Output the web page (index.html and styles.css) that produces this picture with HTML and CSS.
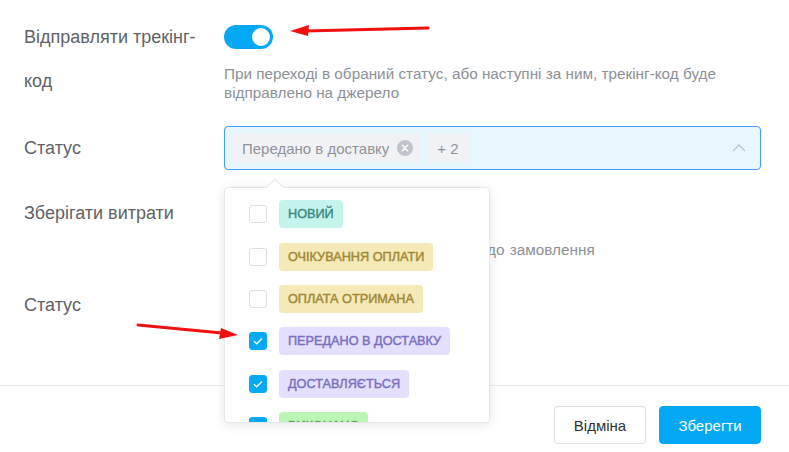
FILE: index.html
```html
<!DOCTYPE html>
<html lang="uk">
<head>
<meta charset="utf-8">
<link rel="stylesheet" href="styles.css">
</head>
<body>
<div class="page">
  <form class="form">
    <div class="row row-track">
      <div class="label">Відправляти трекінг-код</div>
      <div class="content">
        <div class="switch-line"><span class="switch"><span class="knob"></span></span></div>
        <div class="hint">При переході в обраний статус, або наступні за ним, трекінг-код буде відправлено на джерело</div>
      </div>
    </div>
    <div class="row row-status">
      <div class="label">Статус</div>
      <div class="content">
        <div class="select">
          <span class="chip">Передано в доставку <span class="chip-x"><svg viewBox="0 0 16 16" width="16" height="16"><circle cx="8" cy="8" r="8" fill="#c0c4cc"/><path d="M5.3 5.3l5.4 5.4M10.7 5.3l-5.4 5.4" stroke="#fff" stroke-width="1.4" stroke-linecap="round"/></svg></span></span>
          <span class="chip chip-more">+ 2</span>
          <span class="chevron"><svg viewBox="0 0 14 8" width="14" height="8"><path d="M1 7l6-6 6 6" fill="none" stroke="#c0c4cc" stroke-width="1.3"/></svg></span>
        </div>
      </div>
    </div>
    <div class="row row-costs">
      <div class="label">Зберігати витрати</div>
      <div class="content">
        <div class="switch-line"><span class="switch"><span class="knob"></span></span></div>
        <div class="hint">Витрати на відправку будуть додані до замовлення</div>
      </div>
    </div>
    <div class="row row-status2">
      <div class="label">Статус</div>
      <div class="content"></div>
    </div>
  </form>
  <div class="footer">
    <button type="button" class="btn btn-cancel">Відміна</button>
    <button type="button" class="btn btn-save">Зберегти</button>
  </div>

  <div class="dropdown">
    <span class="dd-arrow"></span>
    <ul class="dd-list">
      <li class="dd-item"><span class="cb"></span><span class="tag tag-teal">НОВИЙ</span></li>
      <li class="dd-item"><span class="cb"></span><span class="tag tag-yellow">ОЧІКУВАННЯ ОПЛАТИ</span></li>
      <li class="dd-item"><span class="cb"></span><span class="tag tag-yellow">ОПЛАТА ОТРИМАНА</span></li>
      <li class="dd-item"><span class="cb cb-on"><svg viewBox="0 0 18 18" width="18" height="18"><path d="M5 9.2l2.7 2.6L13 6.5" fill="none" stroke="#fff" stroke-width="1.3"/></svg></span><span class="tag tag-purple">ПЕРЕДАНО В ДОСТАВКУ</span></li>
      <li class="dd-item"><span class="cb cb-on"><svg viewBox="0 0 18 18" width="18" height="18"><path d="M5 9.2l2.7 2.6L13 6.5" fill="none" stroke="#fff" stroke-width="1.3"/></svg></span><span class="tag tag-purple">ДОСТАВЛЯЄТЬСЯ</span></li>
      <li class="dd-item"><span class="cb cb-on"><svg viewBox="0 0 18 18" width="18" height="18"><path d="M5 9.2l2.7 2.6L13 6.5" fill="none" stroke="#fff" stroke-width="1.3"/></svg></span><span class="tag tag-green">ВИКОНАНО</span></li>
    </ul>
  </div>

  <svg class="annot" viewBox="0 0 789 452" width="789" height="452">
    <path d="M428 28 L305 31" stroke="#f01010" stroke-width="3" stroke-linecap="round"/>
    <path d="M290 31 L309 25 L308 36 Z" fill="#f01010"/>
    <path d="M138 325 L222 333" stroke="#f01010" stroke-width="3" stroke-linecap="round"/>
    <path d="M238 335 L219 339 L221 328 Z" fill="#f01010"/>
  </svg>
</div>
</body>
</html>
```

FILE: styles.css
```css
* { box-sizing: border-box; }
html, body { margin: 0; padding: 0; background: #fff; }
body { font-family: "Liberation Sans", Arial, sans-serif; color: #606266; }
.page { position: relative; width: 789px; height: 452px; overflow: hidden; }

.form { padding-top: 15px; margin: 0; }
.row { display: flex; }
.label { width: 224px; padding-left: 24px; padding-right: 24px; font-size: 18px; line-height: 44px; color: #606266; flex: none; }
.content { width: 537px; }

.switch-line { height: 44px; display: flex; align-items: center; }
.switch { display: inline-flex; align-items: center; justify-content: flex-end; width: 49px; height: 24px; border-radius: 12px; background: #03a9f4; padding: 3px; }
.knob { width: 18px; height: 18px; border-radius: 50%; background: #fff; }
.hint { font-size: 15.3px; line-height: 19px; color: #8c9097; margin-top: 4.5px; }
.row-costs .hint { word-spacing: 1px; }

.row-track { height: 111px; }
.row-status { height: 44px; align-items: center; margin-bottom: 21px; }
.select { height: 44px; border: 1px solid #409eff; border-radius: 4px; background: #e8f6fe; display: flex; align-items: center; padding: 0 6px; gap: 7px; position: relative; }
.chip { height: 30px; display: inline-flex; align-items: center; background: #f0f2f5; border-radius: 4px; color: #909399; font-size: 15px; padding: 0 7px 0 11px; }
.chip-x { display: inline-flex; margin-left: 8px; }
.chip-more { padding: 0 10px; }
.chevron { position: absolute; right: 14px; top: 17px; display: flex; }

.row-costs { height: 92px; }
.row-status2 { height: 44px; }

.footer { position: absolute; left: 0; right: 0; top: 385px; border-top: 1px solid #e8e8ee; display: flex; justify-content: flex-end; gap: 13px; padding: 20px 28px 0 0; }
.btn { height: 38px; border-radius: 4px; font-family: "Liberation Sans", Arial, sans-serif; font-size: 15px; padding: 0; cursor: pointer; }
.btn-cancel { width: 92px; background: #fff; border: 1px solid #dcdfe6; color: #303133; }
.btn-save { width: 102px; background: #03a9f4; border: 1px solid #03a9f4; color: #fff; }

.dropdown { position: absolute; left: 224px; top: 187px; width: 266px; height: 236px; background: #fff; border: 1px solid #e4e7ed; border-radius: 4px; box-shadow: 0 2px 12px rgba(0,0,0,0.1); }
.dd-arrow { position: absolute; top: -7px; left: 44px; width: 12px; height: 12px; background: #fff; border-left: 1px solid #e4e7ed; border-top: 1px solid #e4e7ed; transform: rotate(45deg); }
.dd-list { list-style: none; margin: 0; padding: 5px 0 0 0; height: 234px; overflow: hidden; border-radius: 4px; position: relative; }
.dd-item { height: 42.4px; display: flex; align-items: center; padding-left: 24px; }
.cb { width: 18px; height: 18px; border: 1px solid #dcdfe6; border-radius: 3px; background: #fff; flex: none; display: flex; }
.cb-on { background: #03a9f4; border-color: #03a9f4; }
.cb-on svg { margin: -1px; }
.tag { margin-left: 12px; height: 28px; line-height: 28px; border-radius: 4px; padding: 0 9px; font-size: 12.7px; font-weight: normal; -webkit-text-stroke: 0.45px currentColor; }
.tag-teal { background: #c3f5ec; color: #3f8a86; }
.tag-yellow { background: #f5e9b7; color: #a08938; }
.tag-purple { background: #e4dffd; color: #7b70c0; }
.tag-green { background: #bdf5b6; color: #5d9b50; }

.annot { position: absolute; left: 0; top: 0; pointer-events: none; }
```
